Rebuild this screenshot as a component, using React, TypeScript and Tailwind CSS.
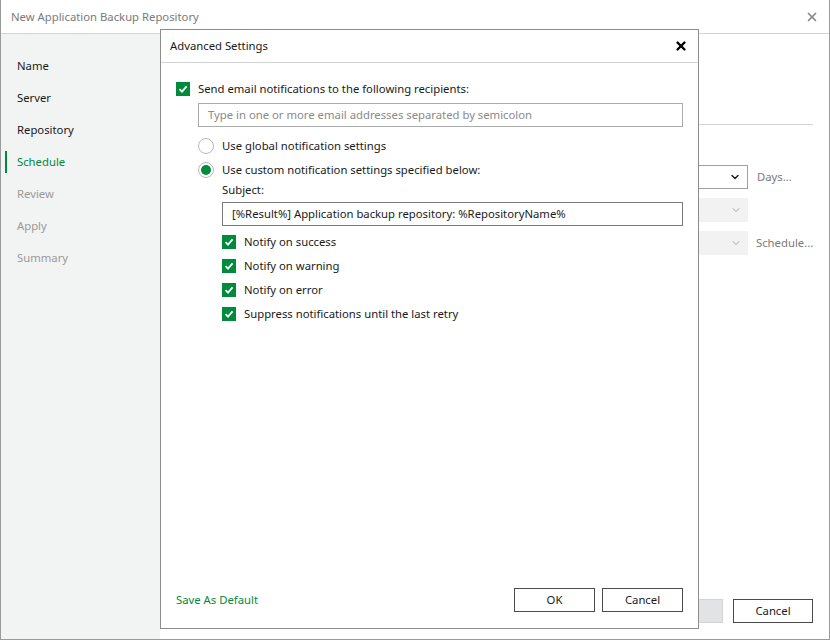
import { X, ChevronDown } from "lucide-react";

const green = "bg-[#008a3c]";

function Check() {
  return (
    <span className={`flex h-[14px] w-[14px] shrink-0 items-center justify-center ${green}`}>
      <svg width="10" height="10" viewBox="0 0 10 10">
        <path d="M1.5 5.2 L4 7.6 L8.6 2.4" stroke="white" strokeWidth="1.8" fill="none" />
      </svg>
    </span>
  );
}

function Radio({ on }: { on?: boolean }) {
  return (
    <span className="flex h-[16px] w-[16px] shrink-0 items-center justify-center rounded-full border border-[#b9b9b9] bg-white">
      {on && <span className={`h-[10px] w-[10px] rounded-full ${green}`} />}
    </span>
  );
}

const steps = [
  { name: "Name", state: "done" },
  { name: "Server", state: "done" },
  { name: "Repository", state: "done" },
  { name: "Schedule", state: "active" },
  { name: "Review", state: "off" },
  { name: "Apply", state: "off" },
  { name: "Summary", state: "off" },
];

const notify = [
  "Notify on success",
  "Notify on warning",
  "Notify on error",
  "Suppress notifications until the last retry",
];

export default function App() {
  return (
    <div
      className="relative h-[640px] w-[830px] overflow-hidden bg-white text-[11.3px] leading-[16px] text-[#1a1a1a]"
      style={{ fontFamily: "'Segoe UI', 'Noto Sans', 'Liberation Sans', sans-serif" }}
    >
      {/* main wizard window */}
      <div className="flex h-[640px] w-[830px] flex-col border-x border-b border-[#9a9a9a]">
        <div className="flex h-[34px] shrink-0 items-center justify-between border-b border-[#d4d4d4] pl-[10px] pr-[10px]">
          <span className="text-[#7a7a7a]">New Application Backup Repository</span>
          <X size={14} strokeWidth={3} className="text-[#8a8a8a]" />
        </div>
        <div className="flex flex-1">
          {/* sidebar */}
          <div className="w-[159px] bg-[#f2f3f3] pt-[16px]">
            {steps.map((s) => (
              <div key={s.name} className="relative flex h-[32px] items-center pl-[16px]">
                {s.state === "active" && (
                  <span className={`absolute left-[4px] top-[5px] h-[22px] w-[2px] ${green}`} />
                )}
                <span
                  className={
                    s.state === "active"
                      ? "text-[#008a3c]"
                      : s.state === "off"
                      ? "text-[#9a9a9a]"
                      : "text-[#1a1a1a]"
                  }
                >
                  {s.name}
                </span>
              </div>
            ))}
          </div>
          {/* background content */}
          <div className="flex flex-1 flex-col">
            <div className="mr-[16px] mt-[90px] border-b border-[#d4d4d4]" />
            <div className="mt-[40px] flex flex-col gap-[9px] pl-[460px]">
              <div className="flex items-center gap-[9px]">
                <div className="flex h-[24px] w-[128px] items-center justify-end border border-[#a0a0a0] pr-[6px]">
                  <ChevronDown size={12} strokeWidth={3} className="text-[#222]" />
                </div>
                <span className="text-[#7a7a7a]">Days...</span>
              </div>
              <div className="flex items-center gap-[9px]">
                <div className="flex h-[24px] w-[128px] items-center justify-end bg-[#f2f2f2] pr-[6px]">
                  <ChevronDown size={12} strokeWidth={2} className="text-[#a8a8a8]" />
                </div>
              </div>
              <div className="flex items-center gap-[8px]">
                <div className="flex h-[24px] w-[128px] items-center justify-end bg-[#f2f2f2] pr-[6px]">
                  <ChevronDown size={12} strokeWidth={2} className="text-[#a8a8a8]" />
                </div>
                <span className="text-[#7a7a7a]">Schedule...</span>
              </div>
            </div>
            <div className="mt-auto mb-[16px] flex justify-end gap-[10px] pr-[16px]">
              <div className="h-[24px] w-[80px] border border-[#d4d4d4] bg-[#e2e3e4]" />
              <div className="flex h-[24px] w-[80px] items-center justify-center border border-[#4a4a4a]">Cancel</div>
            </div>
          </div>
        </div>
      </div>

      {/* Advanced Settings dialog */}
      <div className="absolute left-[160px] top-[29px] flex h-[600px] w-[539px] flex-col border border-[#8c8c8c] bg-white">
        <div className="flex h-[33px] shrink-0 items-center justify-between border-b border-[#d4d4d4] pl-[9px] pr-[10px]">
          <span className="text-[#1a1a1a]">Advanced Settings</span>
          <X size={14} strokeWidth={4} className="text-black" />
        </div>
        <div className="flex flex-col px-[15px] pt-[18px]">
          <label className="flex items-center gap-[8px]">
            <Check />
            <span>Send email notifications to the following recipients:</span>
          </label>
          <div className="ml-[22px] mt-[6px] flex h-[24px] items-center border border-[#ababab] pl-[9px] text-[#8a8a8a]">
            Type in one or more email addresses separated by semicolon
          </div>
          <div className="ml-[22px] mt-[11px] flex items-center gap-[8px]">
            <Radio />
            <span>Use global notification settings</span>
          </div>
          <div className="ml-[22px] mt-[8px] flex items-center gap-[8px]">
            <Radio on />
            <span>Use custom notification settings specified below:</span>
          </div>
          <div className="ml-[46px] mt-[4px]">Subject:</div>
          <div className="ml-[46px] mt-[4px] flex h-[24px] items-center border border-[#7a7a7a] pl-[9px]">
            [%Result%] Application backup repository: %RepositoryName%
          </div>
          <div className="ml-[46px] mt-[8px] flex flex-col gap-[8px]">
            {notify.map((n) => (
              <label key={n} className="flex items-center gap-[8px]">
                <Check />
                <span>{n}</span>
              </label>
            ))}
          </div>
        </div>
        <div className="mt-auto mb-[16px] flex items-center justify-between pl-[15px] pr-[15px]">
          <span className="text-[#008a3c]">Save As Default</span>
          <div className="flex gap-[7px]">
            <div className="flex h-[24px] w-[81px] items-center justify-center border border-[#4a4a4a]">OK</div>
            <div className="flex h-[24px] w-[81px] items-center justify-center border border-[#4a4a4a]">Cancel</div>
          </div>
        </div>
      </div>
    </div>
  );
}
